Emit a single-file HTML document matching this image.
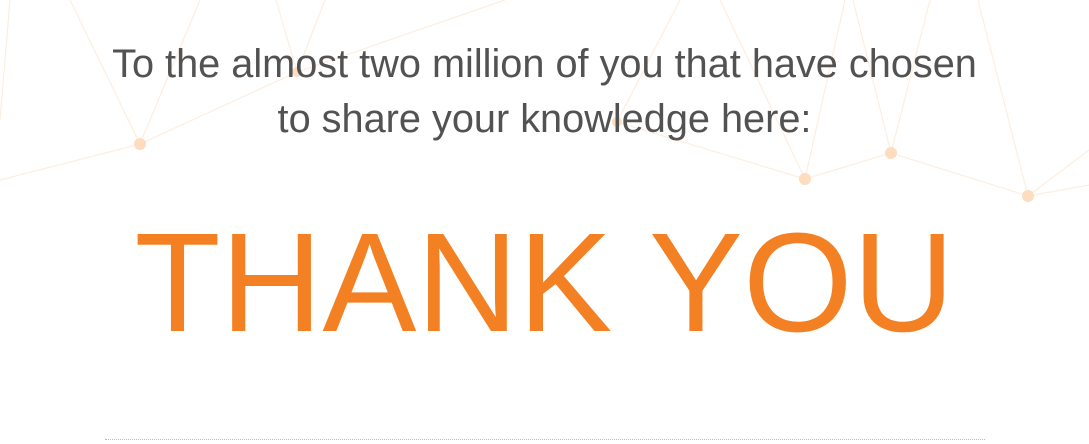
<!DOCTYPE html>
<html><head><style>
html,body{margin:0;padding:0;background:#fff;width:1089px;height:444px;overflow:hidden;position:relative;font-family:"Liberation Sans",sans-serif}
svg{position:absolute;left:0;top:0}
.p{position:absolute;left:0;width:1089px;text-align:center;color:#525252;font-size:39.7px;line-height:55px;top:37px}
.t{position:absolute;left:0;width:1089px;text-align:center;color:#f48024;font-size:141px;line-height:140px;top:212px;letter-spacing:0px}
.hr{position:absolute;left:105px;width:880px;top:439px;border-top:1px dotted #bbb}
</style></head><body>
<svg width="1089" height="444">
<g stroke="#fdeee0" stroke-width="1.2" fill="none">
<path d="M0 180 L140 144 L297 72 L505 0"/>
<path d="M140 144 L200 0"/><path d="M140 144 L70 0"/>
<path d="M297 72 L325 0"/><path d="M297 72 L276 0"/>
<path d="M0 120 L10 0"/>
<path d="M617 122 L680 0"/><path d="M617 122 L805 179 L720 0"/>
<path d="M805 179 L891 153 L1028 196 L1089 185"/>
<path d="M891 153 L930 0"/><path d="M891 153 L853 0"/>
<path d="M1028 196 L978 0"/><path d="M1028 196 L1089 150"/>
<path d="M805 179 L845 0"/>
</g>
<g fill="#fddcc0">
<circle cx="140" cy="144" r="6"/><circle cx="805" cy="179" r="6"/><circle cx="891" cy="153" r="6"/><circle cx="1028" cy="196" r="6"/><circle cx="297" cy="72" r="5"/><circle cx="617" cy="122" r="5"/>
</g>
</svg>
<div class="p">To the almost two million of you that have chosen<br>to share your knowledge here:</div>
<div class="t">THANK YOU</div>
<div class="hr"></div>
</body></html>
